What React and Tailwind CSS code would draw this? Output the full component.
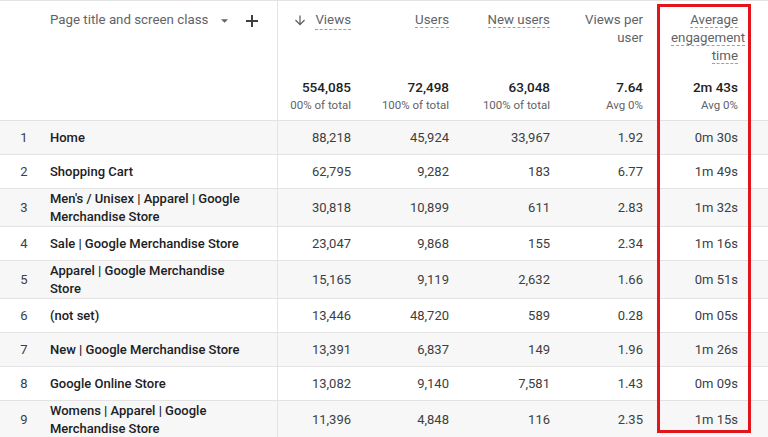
import React from 'react';

const rows = [
  { n: 1, title: 'Home', views: '88,218', users: '45,924', newUsers: '33,967', vpu: '1.92', time: '0m 30s' },
  { n: 2, title: 'Shopping Cart', views: '62,795', users: '9,282', newUsers: '183', vpu: '6.77', time: '1m 49s' },
  { n: 3, title: "Men's / Unisex | Apparel | Google Merchandise Store", views: '30,818', users: '10,899', newUsers: '611', vpu: '2.83', time: '1m 32s', tall: true },
  { n: 4, title: 'Sale | Google Merchandise Store', views: '23,047', users: '9,868', newUsers: '155', vpu: '2.34', time: '1m 16s' },
  { n: 5, title: 'Apparel | Google Merchandise Store', views: '15,165', users: '9,119', newUsers: '2,632', vpu: '1.66', time: '0m 51s', tall: true },
  { n: 6, title: '(not set)', views: '13,446', users: '48,720', newUsers: '589', vpu: '0.28', time: '0m 05s' },
  { n: 7, title: 'New | Google Merchandise Store', views: '13,391', users: '6,837', newUsers: '149', vpu: '1.96', time: '1m 26s' },
  { n: 8, title: 'Google Online Store', views: '13,082', users: '9,140', newUsers: '7,581', vpu: '1.43', time: '0m 09s' },
  { n: 9, title: 'Womens | Apparel | Google Merchandise Store', views: '11,396', users: '4,848', newUsers: '116', vpu: '2.35', time: '1m 15s', tall: true },
];

const grid = 'grid grid-cols-[48px_230px_89px_98px_101px_93px_95px_1fr]';

// dashed underline used on metric labels
function Dashed({ children }) {
  return <span className="border-b border-dashed border-[#9aa0a6]">{children}</span>;
}

function MetricHead({ label, total, sub }) {
  return (
    <div className="flex flex-col justify-between pt-[10px] pb-[7px] pr-4 pl-3 text-right">
      <div className="text-[13.3px] leading-[18px] text-[#5f6368]">{label}</div>
      <div>
        <div className="text-[13.5px] leading-[20px] font-medium text-[#202124]">{total}</div>
        <div className="flex justify-end overflow-hidden whitespace-nowrap text-[11.5px] leading-[16px] text-[#5f6368]">
          <span>{sub}</span>
        </div>
      </div>
    </div>
  );
}

export default function App() {
  return (
    <div className="relative w-[768px] h-[437px] overflow-hidden bg-white" style={{ fontFamily: 'Roboto, "Liberation Sans", sans-serif' }}>
      {/* header */}
      <div className={`${grid} h-[121px] border-t border-b border-[#e3e3e3]`}>
        <div className="col-span-2 border-r border-[#e3e3e3] flex items-start pt-[10px] pl-[50px]">
          <span className="text-[13.3px] leading-[18px] text-[#5f6368]">Page title and screen class</span>
          <svg className="ml-[13px] mt-[8px]" width="7" height="4" viewBox="0 0 8 4">
            <polygon points="0,0 8,0 4,4" fill="#5f6368" />
          </svg>
          <svg className="ml-[18px] mt-[4px]" width="12" height="12" viewBox="0 0 12 12">
            <path d="M6 0v12M0 6h12" stroke="#3c4043" strokeWidth="2" />
          </svg>
        </div>
        <MetricHead
          label={
            <span className="inline-flex items-center gap-[10px]">
              <svg width="10" height="11" viewBox="4 4 16 16">
                <path d="M20 12l-1.41-1.41L13 16.17V4h-2v12.17l-5.58-5.59L4 12l8 8 8-8z" fill="#5f6368" />
              </svg>
              <Dashed>Views</Dashed>
            </span>
          }
          total="554,085"
          sub="100% of total"
        />
        <MetricHead label={<Dashed>Users</Dashed>} total="72,498" sub="100% of total" />
        <MetricHead label={<Dashed>New users</Dashed>} total="63,048" sub="100% of total" />
        <MetricHead label={<>Views per<br />user</>} total="7.64" sub="Avg 0%" />
        <MetricHead label={<Dashed>Average engagement time</Dashed>} total="2m 43s" sub="Avg 0%" />
        <div />
      </div>

      {/* body rows */}
      {rows.map((r, i) => (
        <div
          key={r.n}
          className={`${grid} border-b border-[#e3e3e3] text-[13px] text-[#3c4043] ${r.tall ? 'h-[38px]' : 'h-[34px]'} ${i % 2 === 0 ? 'bg-[#f7f7f7]' : 'bg-white'}`}
        >
          <div className="flex items-center justify-center">{r.n}</div>
          <div className="flex items-center border-r border-[#e3e3e3] pl-[2px] pr-3">
            <span className="font-medium text-[#202124] leading-[18px] max-w-[205px]">{r.title}</span>
          </div>
          <div className="flex items-center justify-end pr-4">{r.views}</div>
          <div className="flex items-center justify-end pr-4">{r.users}</div>
          <div className="flex items-center justify-end pr-4">{r.newUsers}</div>
          <div className="flex items-center justify-end pr-4">{r.vpu}</div>
          <div className="flex items-center justify-end pr-4">{r.time}</div>
          <div />
        </div>
      ))}

      {/* highlight annotation */}
      <div className="absolute left-[657px] top-[4px] w-[94px] h-[429px] border-[3px] border-[#e3141b] pointer-events-none" />
    </div>
  );
}
